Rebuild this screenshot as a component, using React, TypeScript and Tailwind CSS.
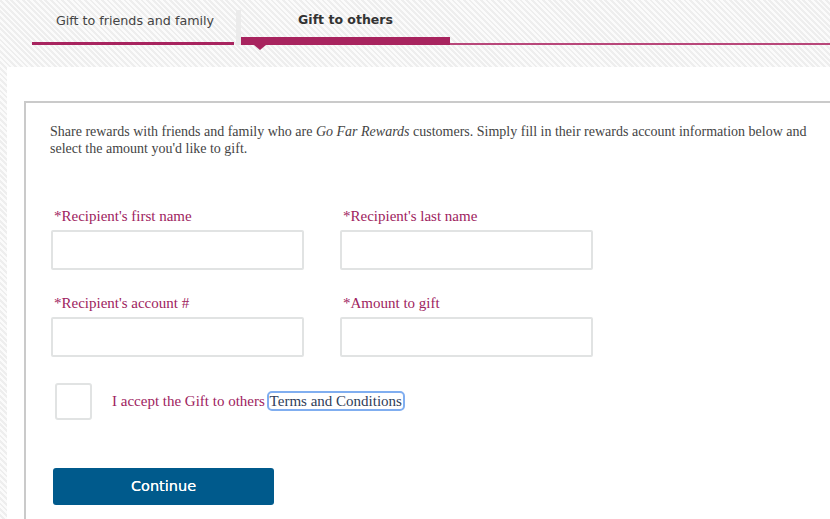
import React from "react"

const serif = "font-['Georgia','Liberation_Serif','DejaVu_Serif',serif]"
const sans = "font-['Verdana','DejaVu_Sans',sans-serif]"

function Field({ label }: { label: string }) {
  return (
    <div className="flex flex-col">
      <label className={`${serif} pl-[3px] text-[15px] leading-[20px] text-[#9e2360]`}>{label}</label>
      <input
        type="text"
        className="mt-[4px] h-[40px] w-[253px] rounded-[2px] border-2 border-[#e1e3e3] bg-white outline-none"
      />
    </div>
  )
}

export default function App() {
  return (
    <div className="flex min-h-screen flex-col bg-[repeating-linear-gradient(45deg,#fbfbfb_0px,#fbfbfb_2px,#eeeeee_2px,#eeeeee_4px)]">
      {/* tabs */}
      <div className="relative flex h-[67px] items-start pl-[32px]">
        <div className="flex h-[45px] w-full items-end">
          <div className="flex h-full w-[202px] flex-col">
            <div className={`${sans} flex-1 pt-[11px] pl-[4px] text-center text-[12.7px] text-[#444]`}>Gift to friends and family</div>
            <div className="h-[3px] bg-[#a8245f]" />
          </div>
          <div className="ml-[2px] h-[35px] w-[5px] bg-[#ebebeb]" />
          <div className="relative flex h-full w-[209px] flex-col">
            <div className={`${sans} flex-1 pt-[11px] text-center text-[12.5px] font-bold text-[#333]`}>Gift to others</div>
            <div className="h-[8px] bg-[#a8245f]" />
            <div className="absolute left-[13px] top-[45px] h-0 w-0 border-x-[6px] border-t-[5px] border-x-transparent border-t-[#a8245f]" />
          </div>
          <div className="h-[2px] flex-1 bg-[#b8477a]" />
        </div>
      </div>

      {/* panel */}
      <div className="ml-[7px] flex flex-1 flex-col bg-white pt-[34px] pl-[17px]">
        <div className="flex-1 border-l-2 border-t-2 border-[#cacaca] pt-[20px] pl-[24px]">
          <p className={`${serif} max-w-[762px] text-[14px] leading-[17px] text-[#444]`}>
            Share rewards with friends and family who are <i>Go Far Rewards</i> customers. Simply fill in their rewards
            account information below and select the amount you'd like to gift.
          </p>

          <div className="ml-[1px] mt-[49px] grid w-fit grid-cols-2 gap-x-[36px] gap-y-[23px]">
            <Field label="*Recipient's first name" />
            <Field label="*Recipient's last name" />
            <Field label="*Recipient's account #" />
            <Field label="*Amount to gift" />
          </div>

          <div className="mt-[26px] ml-[5px] flex items-center">
            <input
              type="checkbox"
              className="h-[37px] w-[37px] appearance-none rounded-[3px] border-2 border-[#e1e3e3] bg-white"
            />
            <span className={`${serif} ml-[20px] text-[15px] text-[#9e2360]`}>
              I accept the Gift to others{" "}
              <a className="rounded-[3px] px-[1px] text-[#2f3d58] outline outline-2 outline-[#80aef0]">Terms and Conditions</a>
            </span>
          </div>

          <button
            className={`${sans} mt-[48px] ml-[3px] h-[37px] w-[221px] rounded-[3px] bg-[#005a8c] text-[14.5px] text-white [text-shadow:0_0_0.4px_#fff]`}
          >
            Continue
          </button>
        </div>
      </div>
    </div>
  )
}
